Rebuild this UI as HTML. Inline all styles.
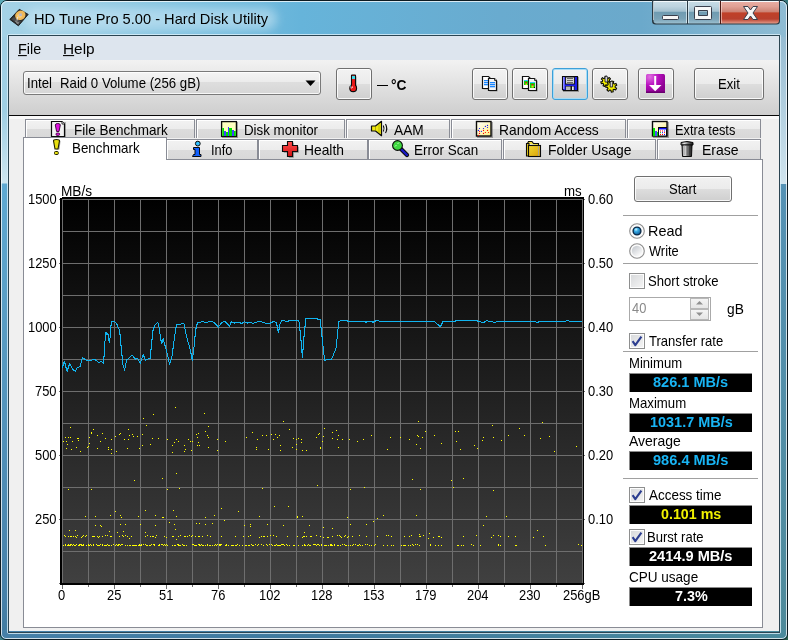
<!DOCTYPE html>
<html><head><meta charset="utf-8"><style>
html,body{margin:0;padding:0;width:788px;height:640px;overflow:hidden;background:linear-gradient(135deg,#5aaab8 0%,#3a7a80 50%,#2a5a4a 100%);}
body{position:relative;font-family:"Liberation Sans", sans-serif;}
.t{position:absolute;white-space:pre;font-family:"Liberation Sans", sans-serif;}
</style></head><body>
<div style="position:absolute;left:0;top:0;width:786px;height:638px;border:1px solid #0d1b22;border-radius:7px 7px 6px 6px;overflow:hidden;">
<div style="position:absolute;left:0;top:0;right:0;bottom:0;background:linear-gradient(to bottom,#a2d1e6 0px,#9fcfe4 110px,#cde6f0 182px,#5ea9d2 183px,#5a9fc6 300px,#4680a8 600px,#3f7a9e 640px);"></div>
<div style="position:absolute;left:0;top:0;right:0;height:36px;background:linear-gradient(to right,#a4d2e6 0px,#9fd0e6 60px,#7cc0e0 200px,#66b4da 300px,#69abcf 500px,#6ba9cb 640px,#90bcd3 788px);"></div>
<div style="position:absolute;left:24px;top:7px;width:252px;height:22px;border-radius:11px;background:rgba(205,232,244,0.55);filter:blur(5px);"></div>
<div style="position:absolute;right:0;top:36px;width:9px;height:147px;background:linear-gradient(to bottom,#96bcd2,#d0e4ee);"></div>
<div style="position:absolute;right:0;top:183px;width:9px;height:457px;background:linear-gradient(to bottom,#5592b5,#4e8a9a);"></div>
<div style="position:absolute;left:0;bottom:0;right:0;height:9px;background:linear-gradient(to right,#4680a8,#3f7a9e 40%,#4a8a9c);"></div>
<div style="position:absolute;left:0;top:0;width:784px;height:636px;border:1px solid rgba(255,255,255,0.75);border-radius:6px 6px 5px 5px;"></div>
</div>
<div style="position:absolute;left:7px;top:34px;width:774px;height:600px;border:1px solid rgba(220,240,250,0.8);box-sizing:border-box;border-radius:2px;"></div>
<div style="position:absolute;left:8px;top:35px;width:772px;height:598px;border:1px solid #2b4552;box-sizing:border-box;"></div>
<div style="position:absolute;left:9px;top:36px;width:770px;height:595px;background:#f0f0f0;"></div>
<svg style="position:absolute;left:6px;top:5px" width="26" height="24" viewBox="0 0 26 24">
<polygon points="13.3,4.3 22.2,9.4 12.4,20.8 3.8,14.4" fill="#2e2e2e" stroke="#151515" stroke-width="0.9" stroke-linejoin="round"/>
<polygon points="5.5,14.3 12.4,19.3 15,16.5 8,12" fill="#4a4a4a"/>
<ellipse cx="14.3" cy="10.3" rx="5.3" ry="4.6" fill="#f0b858" transform="rotate(-25 14.3 10.3)"/>
<ellipse cx="13.5" cy="11" rx="2.5" ry="2" fill="#f8d898" opacity="0.6"/>
<rect x="13.2" y="8.4" width="2.6" height="2.6" fill="#b8b8c8"/>
<path d="M11.5,12 L11,15.5" stroke="#e8e8e8" stroke-width="0.9"/>
<path d="M9,16 L13,18 M10,17.5 L12.5,19" stroke="#a0a0a0" stroke-width="0.8"/>
</svg>
<div class="t" style="left:33.83px;top:11.73px;font-size:14.5px;line-height:14.5px;color:#000;font-weight:400;transform:scale(1.0088,1.07);transform-origin:0 12.274px">HD Tune Pro 5.00 - Hard Disk Utility</div>
<svg style="position:absolute;left:651px;top:0" width="130" height="26" viewBox="0 0 130 26">
<defs>
<linearGradient id="cg" x1="0" y1="0" x2="0" y2="1">
<stop offset="0" stop-color="#c9dde7"/><stop offset="0.25" stop-color="#bcd3df"/><stop offset="0.46" stop-color="#a3c0cf"/>
<stop offset="0.49" stop-color="#6f9bb1"/><stop offset="0.8" stop-color="#7aa3b7"/><stop offset="1" stop-color="#9cc0d0"/></linearGradient>
<linearGradient id="rgc" x1="0" y1="0" x2="0" y2="1">
<stop offset="0" stop-color="#eab0a6"/><stop offset="0.25" stop-color="#e0a094"/><stop offset="0.48" stop-color="#cc8274"/>
<stop offset="0.53" stop-color="#c04028"/><stop offset="0.8" stop-color="#b8402e"/><stop offset="1" stop-color="#e49a88"/></linearGradient>
</defs>
<path d="M1,0 H129 V21 Q129,24.5 125.5,24.5 H4.5 Q1,24.5 1,21 Z" fill="#2a3a44"/>
<path d="M2.5,1 H36 V23.5 H5.5 Q2.5,23.5 2.5,20.5 Z" fill="url(#cg)"/>
<path d="M37,1 H69 V23.5 H37 Z" fill="url(#cg)"/>
<path d="M70,1 H128 V20.5 Q128,23.5 125,23.5 H70 Z" fill="url(#rgc)"/>
<path d="M2.5,1.5 H127.5" stroke="#f4fafd" stroke-width="1"/>
<path d="M2.5,2 V20" stroke="rgba(255,255,255,0.55)" stroke-width="1"/>
<path d="M35.5,2 V23 M37.5,2 V23" stroke="rgba(230,242,248,0.7)" stroke-width="1"/>
<path d="M68.5,2 V23 M70.5,2 V23" stroke="rgba(250,220,215,0.6)" stroke-width="1"/>
<path d="M36.5,1 V24" stroke="#2a3a44" stroke-width="1"/>
<path d="M69.5,1 V24" stroke="#4a1a14" stroke-width="1"/>
<rect x="11.5" y="15.5" width="16" height="4" rx="1" fill="#f6f6f6" stroke="#3a3f4c" stroke-width="1"/>
<path fill-rule="evenodd" d="M43.5,7.5 Q43.5,6.5 44.5,6.5 H59.5 Q60.5,6.5 60.5,7.5 V18.5 Q60.5,19.5 59.5,19.5 H44.5 Q43.5,19.5 43.5,18.5 Z M47.5,10.5 V15.5 H56.5 V10.5 Z" fill="#f8f8f8" stroke="#3a3f4c" stroke-width="1"/>
<path d="M92.5,6.5 H97 L99.5,10 L102,6.5 H106.5 L102,13 L106.5,19.5 H102 L99.5,16 L97,19.5 H92.5 L97,13 Z" fill="#f6f6f6" stroke="#3a3f4c" stroke-width="1" stroke-linejoin="round"/>
</svg>
<div style="position:absolute;left:9px;top:36px;width:770px;height:24px;background:#dde5ee;"></div>
<div class="t" style="left:17.60px;top:41.73px;font-size:14.5px;line-height:14.5px;color:#000;font-weight:400;transform:scale(0.9940,1.07);transform-origin:0 12.274px"><u style="text-underline-offset:1px;text-decoration-thickness:1px">F</u>ile</div>
<div class="t" style="left:62.67px;top:41.73px;font-size:14.5px;line-height:14.5px;color:#000;font-weight:400;transform:scale(1.0591,1.07);transform-origin:0 12.274px"><u style="text-underline-offset:1px;text-decoration-thickness:1px">H</u>elp</div>
<div style="position:absolute;left:9px;top:60px;width:770px;height:55px;background:linear-gradient(to bottom,#f2f2f2,#cecece);"></div>
<div style="position:absolute;left:9px;top:115px;width:770px;height:1px;background:#080808;"></div>
<div style="position:absolute;left:9px;top:116px;width:770px;height:3px;background:#fafafa;"></div>
<div style="position:absolute;left:9px;top:119px;width:770px;height:512px;background:#f0f0f0;"></div>
<div style="position:absolute;left:23px;top:71px;width:298px;height:24px;border:1px solid #7a7a7a;border-radius:3px;box-sizing:border-box;background:linear-gradient(to bottom,#f4f4f4 0%,#ececec 44%,#dedede 46%,#d6d6d6 100%);box-shadow:inset 0 0 0 1px rgba(255,255,255,0.8);"></div>
<div class="t" style="left:26.61px;top:75.73px;font-size:14.5px;line-height:14.5px;color:#000;font-weight:400;transform:scale(0.9087,1.0);transform-origin:0 12.274px">Intel</div>
<div class="t" style="left:59.84px;top:75.73px;font-size:14.5px;line-height:14.5px;color:#000;font-weight:400;transform:scale(0.9117,1.0);transform-origin:0 12.274px">Raid 0 Volume (256 gB)</div>
<svg style="position:absolute;left:305px;top:80px" width="11" height="7"><polygon points="0.5,0.5 10.5,0.5 5.5,6" fill="#000"/></svg>
<div style="position:absolute;left:336px;top:68px;width:36px;height:32px;border:1px solid #707070;border-radius:3px;box-sizing:border-box;background:linear-gradient(to bottom,#f2f2f2 0%,#ebebeb 50%,#dddddd 51%,#cfcfcf 100%);box-shadow:inset 0 0 0 1px rgba(255,255,255,0.85);"></div>
<svg style="position:absolute;left:340px;top:70px" width="24" height="26" viewBox="0 0 24 26">
<path d="M12.5,6.5 H16.5 V21 H12.5 Z" fill="rgba(0,0,0,0.3)"/>
<path d="M11.5,5.5 Q11.5,5 12,5 H15 Q15.5,5 15.5,5.5 V16 H11.5 Z" fill="#e81818" stroke="#0a0a0a" stroke-width="1.1"/>
<rect x="12" y="6" width="3" height="3" fill="#40d8e8"/>
<circle cx="13.2" cy="18.2" r="3.4" fill="#e81818" stroke="#0a0a0a" stroke-width="1.1"/>
<rect x="12" y="14" width="3" height="3" fill="#e81818"/>
<path d="M11.3,18.5 Q11.8,17 13,16.8" stroke="#fff" stroke-width="0.9" fill="none"/>
<rect x="10" y="15" width="1" height="3" fill="#40d8e8" opacity="0.6"/>
</svg>
<div style="position:absolute;left:377px;top:85px;width:11px;height:1px;background:#000;"></div>
<div class="t" style="left:391.05px;top:77.73px;font-size:14.5px;line-height:14.5px;color:#000;font-weight:700;transform:scale(0.9500,1.0);transform-origin:0 12.274px">°C</div>
<div style="position:absolute;left:472px;top:68px;width:36px;height:32px;border:1px solid #707070;border-radius:3px;box-sizing:border-box;background:linear-gradient(to bottom,#f2f2f2 0%,#ebebeb 50%,#dddddd 51%,#cfcfcf 100%);box-shadow:inset 0 0 0 1px rgba(255,255,255,0.85);"></div>
<div style="position:absolute;left:512px;top:68px;width:36px;height:32px;border:1px solid #707070;border-radius:3px;box-sizing:border-box;background:linear-gradient(to bottom,#f2f2f2 0%,#ebebeb 50%,#dddddd 51%,#cfcfcf 100%);box-shadow:inset 0 0 0 1px rgba(255,255,255,0.85);"></div>
<div style="position:absolute;left:552px;top:68px;width:36px;height:32px;border:1px solid #3c9fd8;border-radius:3px;box-sizing:border-box;background:linear-gradient(to bottom,#f2f2f2 0%,#ebebeb 50%,#dddddd 51%,#cfcfcf 100%);box-shadow:inset 0 0 0 1px #a6dcf6;"></div>
<div style="position:absolute;left:592px;top:68px;width:36px;height:32px;border:1px solid #707070;border-radius:3px;box-sizing:border-box;background:linear-gradient(to bottom,#f2f2f2 0%,#ebebeb 50%,#dddddd 51%,#cfcfcf 100%);box-shadow:inset 0 0 0 1px rgba(255,255,255,0.85);"></div>
<div style="position:absolute;left:638px;top:68px;width:36px;height:32px;border:1px solid #707070;border-radius:3px;box-sizing:border-box;background:linear-gradient(to bottom,#f2f2f2 0%,#ebebeb 50%,#dddddd 51%,#cfcfcf 100%);box-shadow:inset 0 0 0 1px rgba(255,255,255,0.85);"></div>
<div style="position:absolute;left:694px;top:68px;width:70px;height:32px;border:1px solid #707070;border-radius:3px;box-sizing:border-box;background:linear-gradient(to bottom,#f2f2f2 0%,#ebebeb 50%,#dddddd 51%,#cfcfcf 100%);box-shadow:inset 0 0 0 1px rgba(255,255,255,0.85);"></div>
<div class="t" style="left:717.55px;top:76.73px;font-size:14.5px;line-height:14.5px;color:#000;font-weight:400;transform:scale(0.9027,1.0);transform-origin:0 12.274px">Exit</div>
<svg style="position:absolute;left:476px;top:70px" width="28" height="26" viewBox="0 0 28 26">
<path d="M7.5,7.5 H13.5 L15.5,9.5 V19.5 H7.5 Z" fill="rgba(0,0,0,0.25)"/>
<path d="M6.5,6.5 H12.5 L14.5,8.5 V18.5 H6.5 Z" fill="#fff" stroke="#111" stroke-width="1.2"/>
<path d="M13.5,9.5 H19.5 L21.5,11.5 V21.5 H13.5 Z" fill="rgba(0,0,0,0.3)"/>
<path d="M12.5,8.5 H18.5 L20.5,10.5 V20.5 H12.5 Z" fill="#f4f4f4" stroke="#111" stroke-width="1.2"/>
<path d="M18.5,8.5 V10.5 H20.5" fill="#fff" stroke="#111" stroke-width="0.8"/>
<g fill="#1a86ff"><rect x="8" y="10" width="4" height="1.3"/><rect x="8" y="12" width="4" height="1.3"/><rect x="8" y="14" width="4" height="1.3"/>
<rect x="14" y="12" width="5" height="1.3"/><rect x="14" y="14" width="5" height="1.3"/><rect x="14" y="16" width="5" height="1.3"/></g>
</svg>
<svg style="position:absolute;left:516px;top:70px" width="28" height="26" viewBox="0 0 28 26">
<path d="M7.5,7.5 H13.5 L15.5,9.5 V19.5 H7.5 Z" fill="rgba(0,0,0,0.25)"/>
<path d="M6.5,6.5 H12.5 L14.5,8.5 V18.5 H6.5 Z" fill="#fff" stroke="#111" stroke-width="1.2"/>
<path d="M13.5,9.5 H19.5 L21.5,11.5 V21.5 H13.5 Z" fill="rgba(0,0,0,0.3)"/>
<path d="M12.5,8.5 H18.5 L20.5,10.5 V20.5 H12.5 Z" fill="#f4f4f4" stroke="#111" stroke-width="1.2"/>
<path d="M18.5,8.5 V10.5 H20.5" fill="#fff" stroke="#111" stroke-width="0.8"/>
<rect x="8" y="10" width="4" height="1" fill="#30c8ff"/><rect x="8" y="11" width="4" height="4" fill="#10d010"/><rect x="9.5" y="12" width="1.5" height="1.5" fill="#e81010"/><rect x="9.5" y="13.5" width="1.5" height="1.5" fill="#e8e010"/>
<rect x="14" y="12" width="5" height="1" fill="#30c8ff"/><rect x="14" y="13" width="5" height="5" fill="#10d010"/><rect x="15.5" y="14" width="2" height="1.5" fill="#e81010"/><rect x="15.5" y="15.5" width="2" height="2" fill="#e8e010"/><rect x="18" y="17" width="1" height="1" fill="#000"/>
</svg>
<svg style="position:absolute;left:556px;top:70px" width="28" height="26" viewBox="0 0 28 26">
<rect x="7" y="7" width="16" height="15" fill="rgba(0,0,0,0.3)"/>
<path d="M6.5,6.5 H21.5 V20.5 H7.5 L6.5,19.5 Z" fill="#1e1ef0" stroke="#0a0a0a" stroke-width="1.1"/>
<rect x="7" y="7" width="1.5" height="12" fill="#8a8aff"/>
<rect x="9.5" y="7" width="9" height="7" fill="#d6d6d6" stroke="#111" stroke-width="0.9"/>
<g stroke="#6a6a6a" stroke-width="1"><line x1="11" y1="8.5" x2="17" y2="8.5"/><line x1="11" y1="10.5" x2="17" y2="10.5"/><line x1="11" y1="12.5" x2="17" y2="12.5"/></g>
<rect x="9.5" y="16" width="9" height="4.5" fill="#111"/>
<rect x="10" y="16.5" width="4.5" height="3.5" fill="#b8b8b8"/><rect x="16" y="16.5" width="1.8" height="3.5" fill="#e8e8e8"/>
</svg>
<svg style="position:absolute;left:596px;top:70px" width="28" height="26" viewBox="0 0 28 26">
<g stroke="#0a0a0a" stroke-width="1.1" fill="#f4f000" stroke-linejoin="round">
<path d="M15.20,11.60 L14.83,13.43 L13.21,13.13 L12.43,14.15 L13.16,15.63 L11.50,16.48 L10.73,15.03 L9.44,15.06 L8.74,16.55 L7.05,15.78 L7.70,14.27 L6.87,13.28 L5.27,13.66 L4.81,11.86 L6.40,11.43 L6.66,10.16 L5.36,9.15 L6.49,7.67 L7.81,8.64 L8.96,8.05 L8.94,6.41 L10.81,6.36 L10.87,8.01 L12.05,8.54 L13.32,7.50 L14.52,8.93 L13.27,10.00 L13.59,11.25 Z"/>
<path d="M20.62,18.26 L19.65,20.02 L18.10,19.21 L16.97,20.03 L17.24,21.75 L15.26,22.10 L14.93,20.38 L13.58,20.00 L12.40,21.29 L10.90,19.96 L12.03,18.63 L11.49,17.34 L9.75,17.22 L9.85,15.22 L11.60,15.27 L12.27,14.05 L11.28,12.61 L12.90,11.44 L13.95,12.84 L15.33,12.60 L15.83,10.93 L17.76,11.47 L17.32,13.16 L18.37,14.09 L19.99,13.44 L20.77,15.29 L19.17,16.00 L19.10,17.39 Z"/>
</g>
<path d="M9,12 V7.5 L10.3,5.8 L11.6,7.5 V12 Z" fill="#d0d0d8" stroke="#222" stroke-width="0.9"/>
<path d="M14.2,17 V12.5 L15.4,11 L16.6,12.5 V17 Z" fill="#d0d0d8" stroke="#222" stroke-width="0.9"/>
</svg>
<svg style="position:absolute;left:642px;top:70px" width="28" height="26" viewBox="0 0 28 26">
<defs><radialGradient id="pg" cx="0.2" cy="0.15" r="0.9"><stop offset="0" stop-color="#e070e0"/><stop offset="0.5" stop-color="#b810c0"/><stop offset="1" stop-color="#8a008e"/></radialGradient></defs>
<rect x="4" y="4" width="19" height="19" rx="1.5" fill="url(#pg)"/>
<rect x="4" y="21.5" width="19" height="1.5" fill="#6a0070"/>
<rect x="12.2" y="6" width="2" height="10" fill="#fff"/>
<path d="M7,15 H19.5 L13.2,21.2 Z" fill="#fff"/>
</svg>
<div style="position:absolute;left:25px;top:119px;width:170px;height:19px;border:1px solid #898c95;border-bottom:none;box-sizing:border-box;background:linear-gradient(to bottom,#f2f2f2 0%,#ececec 50%,#dcdcdc 51%,#d8d8d8 100%);box-shadow:inset 1px 1px 0 #fff;"></div>
<div style="position:absolute;left:196px;top:119px;width:149px;height:19px;border:1px solid #898c95;border-bottom:none;box-sizing:border-box;background:linear-gradient(to bottom,#f2f2f2 0%,#ececec 50%,#dcdcdc 51%,#d8d8d8 100%);box-shadow:inset 1px 1px 0 #fff;"></div>
<div style="position:absolute;left:346px;top:119px;width:104px;height:19px;border:1px solid #898c95;border-bottom:none;box-sizing:border-box;background:linear-gradient(to bottom,#f2f2f2 0%,#ececec 50%,#dcdcdc 51%,#d8d8d8 100%);box-shadow:inset 1px 1px 0 #fff;"></div>
<div style="position:absolute;left:451px;top:119px;width:175px;height:19px;border:1px solid #898c95;border-bottom:none;box-sizing:border-box;background:linear-gradient(to bottom,#f2f2f2 0%,#ececec 50%,#dcdcdc 51%,#d8d8d8 100%);box-shadow:inset 1px 1px 0 #fff;"></div>
<div style="position:absolute;left:627px;top:119px;width:134px;height:19px;border:1px solid #898c95;border-bottom:none;box-sizing:border-box;background:linear-gradient(to bottom,#f2f2f2 0%,#ececec 50%,#dcdcdc 51%,#d8d8d8 100%);box-shadow:inset 1px 1px 0 #fff;"></div>
<div style="position:absolute;left:166px;top:139px;width:92px;height:21px;border:1px solid #898c95;border-bottom:none;box-sizing:border-box;background:linear-gradient(to bottom,#f2f2f2 0%,#ececec 50%,#dcdcdc 51%,#d8d8d8 100%);box-shadow:inset 1px 1px 0 #fff;"></div>
<div style="position:absolute;left:258px;top:139px;width:110px;height:21px;border:1px solid #898c95;border-bottom:none;box-sizing:border-box;background:linear-gradient(to bottom,#f2f2f2 0%,#ececec 50%,#dcdcdc 51%,#d8d8d8 100%);box-shadow:inset 1px 1px 0 #fff;"></div>
<div style="position:absolute;left:368px;top:139px;width:134px;height:21px;border:1px solid #898c95;border-bottom:none;box-sizing:border-box;background:linear-gradient(to bottom,#f2f2f2 0%,#ececec 50%,#dcdcdc 51%,#d8d8d8 100%);box-shadow:inset 1px 1px 0 #fff;"></div>
<div style="position:absolute;left:503px;top:139px;width:153px;height:21px;border:1px solid #898c95;border-bottom:none;box-sizing:border-box;background:linear-gradient(to bottom,#f2f2f2 0%,#ececec 50%,#dcdcdc 51%,#d8d8d8 100%);box-shadow:inset 1px 1px 0 #fff;"></div>
<div style="position:absolute;left:657px;top:139px;width:104px;height:21px;border:1px solid #898c95;border-bottom:none;box-sizing:border-box;background:linear-gradient(to bottom,#f2f2f2 0%,#ececec 50%,#dcdcdc 51%,#d8d8d8 100%);box-shadow:inset 1px 1px 0 #fff;"></div>
<div style="position:absolute;left:23px;top:159px;width:740px;height:469px;border:1px solid #898c95;box-sizing:border-box;background:#fff;"></div>
<div style="position:absolute;left:23px;top:137px;width:144px;height:23px;border:1px solid #898c95;border-bottom:none;box-sizing:border-box;background:#fff;"></div>
<div class="t" style="left:73.62px;top:122.73px;font-size:14.5px;line-height:14.5px;color:#000;font-weight:400;transform:scale(0.9307,1.0);transform-origin:0 12.274px">File Benchmark</div>
<div class="t" style="left:243.73px;top:122.73px;font-size:14.5px;line-height:14.5px;color:#000;font-weight:400;transform:scale(0.9189,1.0);transform-origin:0 12.274px">Disk monitor</div>
<div class="t" style="left:394.20px;top:122.73px;font-size:14.5px;line-height:14.5px;color:#000;font-weight:400;transform:scale(0.9452,1.0);transform-origin:0 12.274px">AAM</div>
<div class="t" style="left:498.50px;top:122.73px;font-size:14.5px;line-height:14.5px;color:#000;font-weight:400;transform:scale(0.9521,1.0);transform-origin:0 12.274px">Random Access</div>
<div class="t" style="left:674.88px;top:122.73px;font-size:14.5px;line-height:14.5px;color:#000;font-weight:400;transform:scale(0.8804,1.0);transform-origin:0 12.274px">Extra tests</div>
<div class="t" style="left:71.83px;top:140.73px;font-size:14.5px;line-height:14.5px;color:#000;font-weight:400;transform:scale(0.9223,1.0);transform-origin:0 12.274px">Benchmark</div>
<div class="t" style="left:211.44px;top:142.73px;font-size:14.5px;line-height:14.5px;color:#000;font-weight:400;transform:scale(0.8857,1.0);transform-origin:0 12.274px">Info</div>
<div class="t" style="left:304.29px;top:142.73px;font-size:14.5px;line-height:14.5px;color:#000;font-weight:400;transform:scale(0.9539,1.0);transform-origin:0 12.274px">Health</div>
<div class="t" style="left:413.92px;top:142.73px;font-size:14.5px;line-height:14.5px;color:#000;font-weight:400;transform:scale(0.9283,1.0);transform-origin:0 12.274px">Error Scan</div>
<div class="t" style="left:547.89px;top:142.73px;font-size:14.5px;line-height:14.5px;color:#000;font-weight:400;transform:scale(0.9595,1.0);transform-origin:0 12.274px">Folder Usage</div>
<div class="t" style="left:701.88px;top:142.73px;font-size:14.5px;line-height:14.5px;color:#000;font-weight:400;transform:scale(0.9670,1.0);transform-origin:0 12.274px">Erase</div>
<svg style="position:absolute;left:0;top:0" width="788" height="170" viewBox="0 0 788 170">
<defs>
<linearGradient id="ly" x1="0" y1="0" x2="1" y2="1"><stop offset="0" stop-color="#ffffff"/><stop offset="1" stop-color="#fff080"/></linearGradient>
<linearGradient id="fold" x1="0" y1="0" x2="1" y2="1"><stop offset="0" stop-color="#f0d830"/><stop offset="1" stop-color="#d8a008"/></linearGradient>
<linearGradient id="trash" x1="0" y1="0" x2="1" y2="0"><stop offset="0" stop-color="#606060"/><stop offset="0.25" stop-color="#f0f0f0"/><stop offset="0.55" stop-color="#808080"/><stop offset="1" stop-color="#101010"/></linearGradient>
<linearGradient id="redc" x1="0" y1="0" x2="0" y2="1"><stop offset="0" stop-color="#ff5050"/><stop offset="1" stop-color="#d01010"/></linearGradient>
</defs>
<!-- File Benchmark: doc with magenta ! -->
<path d="M52.5,122.5 H52.5" />
<rect x="52" y="122" width="14" height="15" fill="rgba(0,0,0,0.25)"/>
<path d="M51.5,121.5 H62 L64.5,124 V136.5 H51.5 Z" fill="#f2f2f2" stroke="#0a0a0a" stroke-width="1.2"/>
<path d="M62,121.5 V124 H64.5" fill="#fff" stroke="#0a0a0a" stroke-width="0.8"/>
<path d="M55.3,125 Q55.3,123.5 57.8,123.5 Q60.3,123.5 60.3,125 L59,131.5 H56.6 Z" fill="#e010e0" stroke="#300030" stroke-width="0.9"/>
<rect x="56" y="133" width="3.6" height="2.4" rx="1" fill="#e010e0" stroke="#300030" stroke-width="0.8"/>
<!-- Benchmark: yellow ! -->
<path d="M54,141 Q54,139.5 56.5,139.5 Q59.5,139.5 59.5,141 L58.5,149 H55 Z" fill="rgba(0,0,0,0.35)" transform="translate(1,0.6)"/>
<path d="M53.5,140.8 Q53.5,139.5 56.5,139.5 Q59.5,139.5 59.5,140.8 L58,149 H55 Z" fill="#e8e010" stroke="#202000" stroke-width="1.1"/>
<rect x="54.5" y="151.5" width="3.8" height="3" rx="1" fill="#e8e010" stroke="#202000" stroke-width="1"/>
<!-- Disk monitor -->
<rect x="222" y="122" width="16" height="16" fill="rgba(0,0,0,0.3)"/>
<rect x="221.6" y="121.6" width="14.8" height="14.8" fill="#ffffc0" stroke="#0a0a0a" stroke-width="1.3"/>
<path d="M222.3,136 V128 H224 V136 Z M226,136 V132 H228 V136 Z M229,136 V128 H232 V136 Z M234,136 V131 H235.8 V136 Z" fill="#00e000"/>
<path d="M224,136 V131 H226 V136 Z M228,136 V127 H229 V136 Z M232,136 V130 H234 V136 Z" fill="#4040ff"/>
<!-- AAM speaker -->
<path d="M371.5,126 H375.5 L381.5,121.3 V135.7 L375.5,131 H371.5 Z" fill="#f0e810" stroke="#0a0a0a" stroke-width="1.2" stroke-linejoin="round"/>
<path d="M375.5,126.5 V130.5" stroke="#505000" stroke-width="0.8" stroke-dasharray="1,1"/>
<path d="M379,124 V133" stroke="#a0a000" stroke-width="0.7"/>
<path d="M383.3,125.5 Q384.8,128.5 383.3,131.5 M385.5,124 Q388,128.5 385.5,133" stroke="#0a0a0a" stroke-width="1.1" fill="none"/>
<!-- Random access -->
<rect x="477" y="122" width="16" height="16" fill="rgba(0,0,0,0.3)"/>
<rect x="476.5" y="121.5" width="14.5" height="14.5" fill="url(#ly)" stroke="#0a0a0a" stroke-width="1.4"/>
<g fill="#1010ff"><circle cx="479.5" cy="128.5" r="0.62"/><circle cx="478.4" cy="130.4" r="0.62"/><circle cx="481.4" cy="131.3" r="0.62"/><circle cx="483.5" cy="128.5" r="0.62"/><circle cx="485.4" cy="126.4" r="0.62"/><circle cx="487.5" cy="125.4" r="0.62"/><circle cx="487.5" cy="127.5" r="0.62"/></g>
<g fill="#ff0000"><circle cx="479.5" cy="131.3" r="0.62"/><circle cx="479.5" cy="133.4" r="0.62"/><circle cx="483.5" cy="130.4" r="0.62"/><circle cx="483.5" cy="133.4" r="0.62"/><circle cx="485.4" cy="132.5" r="0.62"/><circle cx="487.5" cy="130.4" r="0.62"/><circle cx="488.5" cy="132.5" r="0.62"/><circle cx="478.4" cy="135.3" r="0.62"/></g>
<!-- Extra tests -->
<rect x="653" y="122" width="16" height="16" fill="rgba(0,0,0,0.3)"/>
<rect x="652.5" y="121.5" width="14.5" height="14.5" fill="url(#ly)" stroke="#0a0a0a" stroke-width="1.4"/>
<path d="M653,136 V128 H655 V136 Z M657,136 V132 H658 V136 Z" fill="#00e000"/>
<path d="M655,136 V131 H657 V136 Z" fill="#4848ff"/>
<rect x="658.5" y="127.5" width="8" height="8.5" fill="#fff" stroke="#0a0a0a" stroke-width="1"/>
<rect x="659" y="128" width="7.5" height="1.5" fill="#1010ff"/>
<g fill="#ff0000"><rect x="660" y="130.5" width="1" height="1"/><rect x="662" y="130.5" width="1" height="1"/><rect x="660" y="134" width="1" height="1"/><rect x="662" y="134" width="1" height="1"/><rect x="664" y="132.2" width="1" height="1"/></g>
<g fill="#00c000"><rect x="660" y="132.2" width="1" height="1"/></g>
<g fill="#1010ff"><rect x="664" y="130.5" width="1" height="1"/><rect x="664" y="134" width="1" height="1"/><rect x="662" y="132.2" width="1" height="1"/></g>
<!-- Info -->
<circle cx="197.8" cy="143.6" r="2.4" fill="#30c0ff" stroke="#0a0a0a" stroke-width="1"/>
<path d="M193.5,147.5 H199.5 V154.5 H201 V156.5 H192.5 L193.5,154.5 H195 V149.5 H193.5 Z" fill="#1060ff" stroke="#0a0a0a" stroke-width="1" stroke-linejoin="round"/>
<!-- Health -->
<path d="M288,142 H293 V146 H298 V152 H293 V157 H288 V152 H283 V146 H288 Z" fill="rgba(0,0,0,0.35)" transform="translate(0.8,0.8)"/>
<path d="M287.5,141.5 H292.5 V145.5 H297.5 V151.5 H292.5 V156.5 H287.5 V151.5 H282.5 V145.5 H287.5 Z" fill="url(#redc)" stroke="#0a0a0a" stroke-width="1.1"/>
<!-- Error scan -->
<line x1="401" y1="149" x2="407" y2="155" stroke="#0a0a0a" stroke-width="4.2" stroke-linecap="round"/>
<line x1="401" y1="149" x2="407" y2="155" stroke="#1818c8" stroke-width="2.2" stroke-linecap="round"/>
<circle cx="397.5" cy="145.5" r="4.9" fill="#40d840" stroke="#0a0a0a" stroke-width="1.1"/>
<path d="M395,146.5 L396.5,145 M397.5,144 L399,142.5" stroke="#d0ffd0" stroke-width="0.9"/>
<!-- Folder -->
<path d="M527.5,143.5 L528.5,141.5 H532 L533.5,143.5 H538.5 V145.5" fill="#f0e040" stroke="#0a0a0a" stroke-width="1.1"/>
<path d="M526.5,143.5 H529 V156 H526.5 Z" fill="#e8d020" stroke="#0a0a0a" stroke-width="1.1"/>
<rect x="528.5" y="145.5" width="12" height="11" fill="url(#fold)" stroke="#0a0a0a" stroke-width="1.1"/>
<line x1="538.5" y1="146" x2="538.5" y2="156" stroke="#a0a0a0" stroke-width="0.8"/>
<!-- Trash -->
<path d="M681,142.5 Q687,140.5 693,142.5 V145 H681 Z" fill="url(#trash)" stroke="#0a0a0a" stroke-width="1"/>
<path d="M682,145 H692 L691.5,156.5 H682.5 Z" fill="url(#trash)" stroke="#0a0a0a" stroke-width="1"/>
<path d="M684.5,146 V155.5 M687,146 V155.5 M689.5,146 V155.5" stroke="rgba(0,0,0,0.35)" stroke-width="0.7"/>
</svg>
<div style="position:absolute;left:60px;top:197px;width:524px;height:388px;background:#000;"></div>
<div style="position:absolute;left:62px;top:199px;width:521px;height:384px;background:linear-gradient(to bottom,#000000 0%,#404040 100%);"></div>
<svg style="position:absolute;left:0;top:0" width="788" height="640" viewBox="0 0 788 640">
<path d="M62.5,199 V583 M88.5,199 V583 M114.5,199 V583 M140.5,199 V583 M166.5,199 V583 M192.5,199 V583 M218.5,199 V583 M244.5,199 V583 M270.5,199 V583 M296.5,199 V583 M322.5,199 V583 M348.5,199 V583 M374.5,199 V583 M400.5,199 V583 M426.5,199 V583 M452.5,199 V583 M478.5,199 V583 M504.5,199 V583 M530.5,199 V583 M556.5,199 V583 M582.5,199 V583 M62,199.5 H583 M62,231.5 H583 M62,263.5 H583 M62,295.5 H583 M62,327.5 H583 M62,359.5 H583 M62,391.5 H583 M62,423.5 H583 M62,455.5 H583 M62,487.5 H583 M62,519.5 H583 M62,551.5 H583 M62,583.5 H583" stroke="#6e6e6e" stroke-width="1" fill="none"/>
<rect x="60" y="583" width="524" height="2" fill="#000"/>
<rect x="583" y="197" width="1" height="388" fill="#000"/>
<rect x="60" y="197" width="2" height="388" fill="#000"/>
<rect x="62" y="197" width="521" height="2" fill="#000"/>
<rect x="60" y="197" width="2" height="1" fill="#fff"/>
<path d="M62.5,585 V589 M88.5,585 V587 M114.5,585 V589 M140.5,585 V587 M166.5,585 V589 M192.5,585 V587 M218.5,585 V589 M244.5,585 V587 M270.5,585 V589 M296.5,585 V587 M322.5,585 V589 M348.5,585 V587 M374.5,585 V589 M400.5,585 V587 M426.5,585 V589 M452.5,585 V587 M478.5,585 V589 M504.5,585 V587 M530.5,585 V589 M556.5,585 V587 M582.5,585 V589 M59,199.5 H60 M584,199.5 H585 M59,263.5 H60 M584,263.5 H585 M59,327.5 H60 M584,327.5 H585 M59,391.5 H60 M584,391.5 H585 M59,455.5 H60 M584,455.5 H585 M59,519.5 H60 M584,519.5 H585 M59,583.5 H60 M584,583.5 H585" stroke="#707070" stroke-width="1" fill="none"/>
<path d="M70,427h1v1h-1zM65,437h1v1h-1zM68,437h1v1h-1zM70,437h1v1h-1zM77,438h1v1h-1zM78,438h1v1h-1zM78,440h1v1h-1zM63,441h1v1h-1zM66,441h1v1h-1zM72,441h1v1h-1zM67,444h1v1h-1zM66,448h1v1h-1zM71,449h1v1h-1zM76,447h1v1h-1zM80,451h1v1h-1zM91,432h1v1h-1zM91,433h1v1h-1zM93,429h1v1h-1zM89,437h1v1h-1zM97,435h1v1h-1zM102,433h1v1h-1zM105,438h1v1h-1zM100,441h1v1h-1zM89,443h1v1h-1zM88,446h1v1h-1zM87,447h1v1h-1zM97,448h1v1h-1zM111,439h1v1h-1zM108,447h1v1h-1zM108,449h1v1h-1zM111,449h1v1h-1zM111,453h1v1h-1zM116,451h1v1h-1zM115,436h1v1h-1zM119,434h1v1h-1zM120,433h1v1h-1zM128,429h1v1h-1zM129,435h1v1h-1zM132,434h1v1h-1zM133,436h1v1h-1zM124,439h1v1h-1zM128,439h1v1h-1zM137,436h1v1h-1zM127,448h1v1h-1zM139,448h1v1h-1zM142,434h1v1h-1zM143,418h1v1h-1zM146,425h1v1h-1zM153,414h1v1h-1zM152,438h1v1h-1zM158,438h1v1h-1zM142,445h1v1h-1zM150,444h1v1h-1zM175,407h1v1h-1zM204,413h1v1h-1zM208,426h1v1h-1zM205,431h1v1h-1zM198,433h1v1h-1zM196,434h1v1h-1zM207,435h1v1h-1zM197,437h1v1h-1zM208,437h1v1h-1zM167,439h1v1h-1zM176,439h1v1h-1zM188,439h1v1h-1zM178,441h1v1h-1zM190,441h1v1h-1zM192,441h1v1h-1zM174,442h1v1h-1zM198,442h1v1h-1zM172,445h1v1h-1zM184,445h1v1h-1zM197,445h1v1h-1zM199,445h1v1h-1zM208,447h1v1h-1zM185,449h1v1h-1zM184,451h1v1h-1zM191,450h1v1h-1zM172,452h1v1h-1zM217,439h1v1h-1zM217,450h1v1h-1zM225,441h1v1h-1zM246,437h1v1h-1zM252,432h1v1h-1zM257,439h1v1h-1zM256,447h1v1h-1zM256,449h1v1h-1zM283,421h1v1h-1zM289,429h1v1h-1zM262,435h1v1h-1zM266,435h1v1h-1zM271,434h1v1h-1zM275,434h1v1h-1zM279,435h1v1h-1zM277,437h1v1h-1zM273,439h1v1h-1zM280,445h1v1h-1zM268,449h1v1h-1zM280,450h1v1h-1zM293,438h1v1h-1zM296,439h1v1h-1zM298,438h1v1h-1zM301,439h1v1h-1zM301,442h1v1h-1zM296,444h1v1h-1zM292,447h1v1h-1zM296,449h1v1h-1zM302,450h1v1h-1zM306,450h1v1h-1zM316,437h1v1h-1zM318,434h1v1h-1zM319,433h1v1h-1zM324,428h1v1h-1zM323,436h1v1h-1zM322,441h1v1h-1zM320,447h1v1h-1zM320,448h1v1h-1zM332,432h1v1h-1zM336,430h1v1h-1zM338,435h1v1h-1zM332,438h1v1h-1zM337,439h1v1h-1zM342,439h1v1h-1zM349,439h1v1h-1zM338,447h1v1h-1zM357,441h1v1h-1zM418,421h1v1h-1zM363,439h1v1h-1zM371,435h1v1h-1zM390,437h1v1h-1zM400,437h1v1h-1zM409,439h1v1h-1zM417,435h1v1h-1zM418,436h1v1h-1zM422,437h1v1h-1zM425,431h1v1h-1zM416,444h1v1h-1zM420,448h1v1h-1zM387,449h1v1h-1zM434,435h1v1h-1zM441,443h1v1h-1zM455,431h1v1h-1zM458,431h1v1h-1zM456,441h1v1h-1zM460,449h1v1h-1zM474,445h1v1h-1zM477,448h1v1h-1zM482,440h1v1h-1zM483,437h1v1h-1zM492,425h1v1h-1zM493,437h1v1h-1zM501,440h1v1h-1zM508,435h1v1h-1zM519,428h1v1h-1zM524,435h1v1h-1zM540,438h1v1h-1zM542,422h1v1h-1zM549,436h1v1h-1zM554,451h1v1h-1zM576,446h1v1h-1zM134,480h1v1h-1zM68,489h1v1h-1zM91,489h1v1h-1zM85,516h1v1h-1zM95,516h1v1h-1zM110,515h1v1h-1zM115,511h1v1h-1zM120,515h1v1h-1zM121,517h1v1h-1zM138,516h1v1h-1zM145,510h1v1h-1zM155,515h1v1h-1zM95,525h1v1h-1zM100,525h1v1h-1zM101,526h1v1h-1zM120,524h1v1h-1zM125,524h1v1h-1zM140,524h1v1h-1zM155,525h1v1h-1zM69,530h1v1h-1zM75,530h1v1h-1zM109,531h1v1h-1zM123,531h1v1h-1zM162,478h1v1h-1zM176,473h1v1h-1zM167,489h1v1h-1zM179,488h1v1h-1zM173,510h1v1h-1zM176,516h1v1h-1zM162,517h1v1h-1zM163,517h1v1h-1zM169,522h1v1h-1zM174,524h1v1h-1zM175,529h1v1h-1zM196,523h1v1h-1zM199,523h1v1h-1zM205,517h1v1h-1zM205,524h1v1h-1zM212,523h1v1h-1zM214,515h1v1h-1zM221,508h1v1h-1zM224,520h1v1h-1zM238,511h1v1h-1zM244,525h1v1h-1zM250,524h1v1h-1zM250,526h1v1h-1zM259,516h1v1h-1zM262,488h1v1h-1zM317,485h1v1h-1zM350,489h1v1h-1zM274,506h1v1h-1zM288,506h1v1h-1zM297,516h1v1h-1zM297,517h1v1h-1zM302,516h1v1h-1zM347,517h1v1h-1zM267,524h1v1h-1zM283,525h1v1h-1zM309,525h1v1h-1zM323,527h1v1h-1zM332,528h1v1h-1zM350,524h1v1h-1zM364,487h1v1h-1zM412,479h1v1h-1zM420,489h1v1h-1zM451,480h1v1h-1zM453,487h1v1h-1zM383,515h1v1h-1zM377,518h1v1h-1zM373,521h1v1h-1zM366,524h1v1h-1zM416,515h1v1h-1zM463,478h1v1h-1zM493,490h1v1h-1zM486,516h1v1h-1zM506,516h1v1h-1zM483,525h1v1h-1zM537,530h1v1h-1zM63,545h1v1h-1zM64,535h1v1h-1zM65,544h1v1h-1zM65,545h1v1h-1zM65,536h1v1h-1zM67,545h1v1h-1zM68,545h1v1h-1zM68,544h1v1h-1zM68,536h1v1h-1zM69,545h1v1h-1zM70,545h1v1h-1zM70,544h1v1h-1zM70,536h1v1h-1zM71,544h1v1h-1zM71,536h1v1h-1zM72,545h1v1h-1zM73,544h1v1h-1zM73,536h1v1h-1zM74,545h1v1h-1zM75,545h1v1h-1zM75,536h1v1h-1zM75,536h1v1h-1zM76,544h1v1h-1zM76,537h1v1h-1zM77,535h1v1h-1zM78,545h1v1h-1zM79,544h1v1h-1zM79,545h1v1h-1zM80,544h1v1h-1zM81,544h1v1h-1zM81,545h1v1h-1zM81,537h1v1h-1zM82,545h1v1h-1zM82,536h1v1h-1zM83,544h1v1h-1zM83,545h1v1h-1zM83,535h1v1h-1zM85,536h1v1h-1zM86,545h1v1h-1zM86,535h1v1h-1zM88,544h1v1h-1zM88,545h1v1h-1zM89,545h1v1h-1zM90,544h1v1h-1zM91,545h1v1h-1zM92,536h1v1h-1zM93,544h1v1h-1zM93,545h1v1h-1zM93,536h1v1h-1zM94,536h1v1h-1zM96,544h1v1h-1zM97,545h1v1h-1zM97,536h1v1h-1zM98,545h1v1h-1zM98,537h1v1h-1zM99,545h1v1h-1zM99,536h1v1h-1zM100,544h1v1h-1zM102,545h1v1h-1zM102,544h1v1h-1zM102,536h1v1h-1zM104,545h1v1h-1zM105,545h1v1h-1zM105,535h1v1h-1zM106,545h1v1h-1zM107,544h1v1h-1zM107,535h1v1h-1zM108,545h1v1h-1zM109,545h1v1h-1zM110,536h1v1h-1zM111,545h1v1h-1zM111,536h1v1h-1zM113,544h1v1h-1zM115,545h1v1h-1zM116,544h1v1h-1zM117,545h1v1h-1zM117,532h1v1h-1zM118,544h1v1h-1zM118,545h1v1h-1zM119,544h1v1h-1zM119,536h1v1h-1zM120,545h1v1h-1zM121,544h1v1h-1zM122,544h1v1h-1zM122,535h1v1h-1zM123,536h1v1h-1zM125,545h1v1h-1zM125,535h1v1h-1zM127,545h1v1h-1zM127,536h1v1h-1zM129,545h1v1h-1zM129,538h1v1h-1zM130,545h1v1h-1zM131,536h1v1h-1zM132,545h1v1h-1zM133,545h1v1h-1zM134,545h1v1h-1zM135,545h1v1h-1zM136,545h1v1h-1zM138,545h1v1h-1zM139,545h1v1h-1zM139,544h1v1h-1zM140,545h1v1h-1zM141,544h1v1h-1zM141,545h1v1h-1zM143,544h1v1h-1zM145,544h1v1h-1zM145,536h1v1h-1zM145,532h1v1h-1zM146,545h1v1h-1zM147,545h1v1h-1zM147,535h1v1h-1zM149,545h1v1h-1zM150,545h1v1h-1zM150,536h1v1h-1zM151,544h1v1h-1zM152,536h1v1h-1zM153,544h1v1h-1zM153,536h1v1h-1zM154,545h1v1h-1zM154,544h1v1h-1zM155,537h1v1h-1zM156,535h1v1h-1zM158,545h1v1h-1zM159,544h1v1h-1zM159,545h1v1h-1zM161,544h1v1h-1zM162,544h1v1h-1zM163,545h1v1h-1zM164,544h1v1h-1zM164,536h1v1h-1zM165,545h1v1h-1zM166,544h1v1h-1zM166,537h1v1h-1zM167,545h1v1h-1zM172,545h1v1h-1zM172,536h1v1h-1zM173,536h1v1h-1zM174,545h1v1h-1zM175,545h1v1h-1zM176,539h1v1h-1zM177,544h1v1h-1zM178,545h1v1h-1zM178,544h1v1h-1zM178,536h1v1h-1zM179,545h1v1h-1zM180,545h1v1h-1zM180,535h1v1h-1zM182,544h1v1h-1zM183,545h1v1h-1zM184,545h1v1h-1zM184,536h1v1h-1zM185,536h1v1h-1zM186,545h1v1h-1zM187,536h1v1h-1zM189,535h1v1h-1zM191,536h1v1h-1zM192,544h1v1h-1zM192,535h1v1h-1zM193,544h1v1h-1zM194,545h1v1h-1zM195,545h1v1h-1zM195,536h1v1h-1zM196,545h1v1h-1zM198,544h1v1h-1zM198,536h1v1h-1zM199,544h1v1h-1zM199,545h1v1h-1zM199,536h1v1h-1zM200,545h1v1h-1zM201,544h1v1h-1zM202,545h1v1h-1zM202,536h1v1h-1zM203,545h1v1h-1zM205,545h1v1h-1zM207,545h1v1h-1zM207,544h1v1h-1zM207,535h1v1h-1zM209,545h1v1h-1zM210,545h1v1h-1zM210,536h1v1h-1zM212,545h1v1h-1zM214,545h1v1h-1zM215,544h1v1h-1zM216,545h1v1h-1zM217,544h1v1h-1zM219,545h1v1h-1zM219,544h1v1h-1zM220,545h1v1h-1zM220,544h1v1h-1zM221,544h1v1h-1zM221,536h1v1h-1zM225,545h1v1h-1zM226,545h1v1h-1zM226,544h1v1h-1zM228,545h1v1h-1zM231,545h1v1h-1zM232,545h1v1h-1zM233,545h1v1h-1zM235,545h1v1h-1zM235,536h1v1h-1zM236,545h1v1h-1zM237,544h1v1h-1zM239,545h1v1h-1zM242,545h1v1h-1zM243,536h1v1h-1zM245,545h1v1h-1zM246,545h1v1h-1zM248,545h1v1h-1zM248,536h1v1h-1zM249,545h1v1h-1zM250,535h1v1h-1zM251,544h1v1h-1zM252,545h1v1h-1zM253,545h1v1h-1zM255,544h1v1h-1zM257,545h1v1h-1zM258,544h1v1h-1zM259,537h1v1h-1zM261,544h1v1h-1zM261,536h1v1h-1zM263,545h1v1h-1zM263,536h1v1h-1zM264,536h1v1h-1zM266,544h1v1h-1zM267,545h1v1h-1zM267,536h1v1h-1zM269,544h1v1h-1zM270,535h1v1h-1zM271,544h1v1h-1zM272,545h1v1h-1zM273,535h1v1h-1zM274,545h1v1h-1zM275,545h1v1h-1zM276,544h1v1h-1zM276,536h1v1h-1zM277,545h1v1h-1zM278,545h1v1h-1zM279,545h1v1h-1zM280,545h1v1h-1zM281,544h1v1h-1zM282,544h1v1h-1zM283,544h1v1h-1zM284,545h1v1h-1zM286,544h1v1h-1zM287,545h1v1h-1zM287,536h1v1h-1zM289,545h1v1h-1zM293,545h1v1h-1zM294,545h1v1h-1zM297,536h1v1h-1zM298,545h1v1h-1zM302,545h1v1h-1zM302,537h1v1h-1zM303,536h1v1h-1zM304,545h1v1h-1zM304,544h1v1h-1zM304,536h1v1h-1zM304,532h1v1h-1zM305,545h1v1h-1zM306,536h1v1h-1zM307,545h1v1h-1zM308,544h1v1h-1zM309,545h1v1h-1zM310,545h1v1h-1zM310,536h1v1h-1zM311,536h1v1h-1zM313,544h1v1h-1zM314,544h1v1h-1zM315,544h1v1h-1zM316,545h1v1h-1zM316,535h1v1h-1zM317,544h1v1h-1zM318,544h1v1h-1zM319,545h1v1h-1zM320,536h1v1h-1zM321,545h1v1h-1zM321,544h1v1h-1zM323,537h1v1h-1zM324,545h1v1h-1zM325,545h1v1h-1zM326,545h1v1h-1zM327,537h1v1h-1zM328,545h1v1h-1zM328,537h1v1h-1zM330,545h1v1h-1zM330,544h1v1h-1zM331,545h1v1h-1zM331,544h1v1h-1zM332,545h1v1h-1zM332,536h1v1h-1zM334,544h1v1h-1zM334,545h1v1h-1zM337,545h1v1h-1zM337,535h1v1h-1zM338,545h1v1h-1zM339,535h1v1h-1zM340,545h1v1h-1zM340,536h1v1h-1zM341,537h1v1h-1zM342,544h1v1h-1zM344,544h1v1h-1zM344,536h1v1h-1zM345,545h1v1h-1zM345,535h1v1h-1zM346,545h1v1h-1zM347,537h1v1h-1zM348,545h1v1h-1zM348,536h1v1h-1zM350,545h1v1h-1zM352,545h1v1h-1zM352,536h1v1h-1zM353,544h1v1h-1zM355,544h1v1h-1zM357,545h1v1h-1zM358,545h1v1h-1zM359,544h1v1h-1zM359,535h1v1h-1zM360,545h1v1h-1zM362,545h1v1h-1zM365,544h1v1h-1zM366,536h1v1h-1zM367,544h1v1h-1zM369,545h1v1h-1zM371,545h1v1h-1zM374,545h1v1h-1zM375,544h1v1h-1zM377,536h1v1h-1zM383,545h1v1h-1zM386,535h1v1h-1zM387,545h1v1h-1zM388,535h1v1h-1zM391,545h1v1h-1zM391,536h1v1h-1zM393,545h1v1h-1zM401,545h1v1h-1zM403,545h1v1h-1zM404,545h1v1h-1zM404,536h1v1h-1zM405,545h1v1h-1zM408,545h1v1h-1zM409,536h1v1h-1zM410,545h1v1h-1zM411,535h1v1h-1zM412,544h1v1h-1zM413,545h1v1h-1zM415,544h1v1h-1zM417,544h1v1h-1zM419,545h1v1h-1zM419,536h1v1h-1zM419,534h1v1h-1zM420,536h1v1h-1zM423,535h1v1h-1zM428,538h1v1h-1zM429,533h1v1h-1zM430,545h1v1h-1zM430,544h1v1h-1zM433,537h1v1h-1zM435,545h1v1h-1zM438,545h1v1h-1zM438,536h1v1h-1zM439,536h1v1h-1zM441,545h1v1h-1zM441,537h1v1h-1zM457,545h1v1h-1zM458,545h1v1h-1zM461,545h1v1h-1zM463,545h1v1h-1zM463,536h1v1h-1zM471,544h1v1h-1zM473,545h1v1h-1zM476,535h1v1h-1zM480,545h1v1h-1zM491,537h1v1h-1zM493,535h1v1h-1zM498,545h1v1h-1zM498,544h1v1h-1zM498,535h1v1h-1zM500,545h1v1h-1zM500,536h1v1h-1zM508,536h1v1h-1zM515,545h1v1h-1zM515,536h1v1h-1zM516,545h1v1h-1zM533,537h1v1h-1zM543,536h1v1h-1zM545,545h1v1h-1zM578,544h1v1h-1zM581,545h1v1h-1z" fill="#ffff00"/>
<path d="M62.2,368.0 L64.4,361.4 L67.1,371.3 L69.6,363.6 L73.1,369.6 L75.3,371.3 L77.0,368.0 L80.2,366.3 L82.4,357.6 L84.6,359.2 L88.2,360.9 L91.7,360.1 L95.0,359.5 L98.8,362.5 L101.6,361.4 L103.8,363.6 L104.3,347.7 L106.0,331.9 L107.0,335.2 L107.9,333.0 L109.2,342.3 L110.1,337.4 L110.9,326.4 L111.6,321.2 L114.2,321.2 L116.9,324.2 L119.6,330.2 L121.3,348.3 L122.9,364.7 L124.6,370.2 L126.7,359.8 L128.9,358.1 L132.2,355.1 L135.5,359.2 L137.7,358.1 L140.3,363.4 L143.2,354.3 L145.4,360.3 L150.3,358.1 L151.4,345.0 L153.1,329.7 L155.2,324.8 L157.4,322.3 L158.5,323.7 L160.2,335.2 L161.5,343.9 L163.4,338.4 L164.0,341.7 L167.3,353.8 L169.5,364.2 L171.7,358.1 L174.4,338.4 L176.4,324.8 L180.4,324.2 L182.6,323.3 L184.2,324.2 L186.4,336.3 L189.7,347.2 L192.4,360.3 L194.1,346.1 L195.7,329.7 L197.4,322.9 L202.8,321.5 L206.1,322.6 L210.5,321.2 L213.6,322.2 L218.5,327.0 L221.5,322.7 L225.1,321.3 L229.5,326.3 L231.3,321.7 L234.9,323.1 L237.5,322.2 L242.0,323.4 L244.6,321.7 L247.3,323.1 L250.0,322.2 L252.6,323.4 L259.7,321.3 L265.1,323.1 L270.4,323.1 L274.0,321.3 L276.6,323.1 L278.4,332.9 L280.2,323.1 L281.9,320.4 L286.4,321.3 L293.5,320.4 L298.8,320.4 L300.6,335.5 L302.4,357.7 L304.1,335.5 L305.9,318.1 L320.1,319.2 L321.9,335.5 L324.6,360.4 L327.2,359.5 L331.7,359.0 L336.1,348.0 L338.8,321.3 L342.3,320.4 L350.0,321.3 L364.9,321.3 L366.0,322.4 L367.0,321.3 L372.0,321.3 L373.0,322.4 L374.0,321.3 L378.2,320.5 L380.0,321.4 L434.1,321.4 L440.4,326.7 L443.0,321.4 L471.4,320.5 L476.0,320.6 L478.6,321.3 L483.1,322.8 L486.6,320.6 L490.2,321.5 L495.5,322.4 L497.3,321.5 L534.6,321.5 L537.3,322.4 L540.0,321.5 L564.8,321.5 L567.5,320.5 L570.1,321.5 L582.2,321.5" stroke="#10b4f0" stroke-width="1.05" fill="none" stroke-linejoin="round" shape-rendering="crispEdges"/>
</svg>
<div class="t" style="left:28.26px;top:191.73px;font-size:14.5px;line-height:14.5px;color:#000;font-weight:400;transform:scale(0.8900,1.0);transform-origin:0 12.274px">1500</div>
<div class="t" style="left:28.26px;top:255.73px;font-size:14.5px;line-height:14.5px;color:#000;font-weight:400;transform:scale(0.8900,1.0);transform-origin:0 12.274px">1250</div>
<div class="t" style="left:28.26px;top:319.73px;font-size:14.5px;line-height:14.5px;color:#000;font-weight:400;transform:scale(0.8900,1.0);transform-origin:0 12.274px">1000</div>
<div class="t" style="left:35.44px;top:383.73px;font-size:14.5px;line-height:14.5px;color:#000;font-weight:400;transform:scale(0.8900,1.0);transform-origin:0 12.274px">750</div>
<div class="t" style="left:35.44px;top:447.73px;font-size:14.5px;line-height:14.5px;color:#000;font-weight:400;transform:scale(0.8900,1.0);transform-origin:0 12.274px">500</div>
<div class="t" style="left:35.44px;top:511.73px;font-size:14.5px;line-height:14.5px;color:#000;font-weight:400;transform:scale(0.8900,1.0);transform-origin:0 12.274px">250</div>
<div class="t" style="left:587.61px;top:191.73px;font-size:14.5px;line-height:14.5px;color:#000;font-weight:400;transform:scale(0.8900,1.0);transform-origin:0 12.274px">0.60</div>
<div class="t" style="left:587.61px;top:255.73px;font-size:14.5px;line-height:14.5px;color:#000;font-weight:400;transform:scale(0.8900,1.0);transform-origin:0 12.274px">0.50</div>
<div class="t" style="left:587.61px;top:319.73px;font-size:14.5px;line-height:14.5px;color:#000;font-weight:400;transform:scale(0.8900,1.0);transform-origin:0 12.274px">0.40</div>
<div class="t" style="left:587.61px;top:383.73px;font-size:14.5px;line-height:14.5px;color:#000;font-weight:400;transform:scale(0.8900,1.0);transform-origin:0 12.274px">0.30</div>
<div class="t" style="left:587.61px;top:447.73px;font-size:14.5px;line-height:14.5px;color:#000;font-weight:400;transform:scale(0.8900,1.0);transform-origin:0 12.274px">0.20</div>
<div class="t" style="left:587.61px;top:511.73px;font-size:14.5px;line-height:14.5px;color:#000;font-weight:400;transform:scale(0.8900,1.0);transform-origin:0 12.274px">0.10</div>
<div class="t" style="left:61.31px;top:183.73px;font-size:14.5px;line-height:14.5px;color:#000;font-weight:400;transform:scale(0.9417,1.0);transform-origin:0 12.274px">MB/s</div>
<div class="t" style="left:564.10px;top:183.73px;font-size:14.5px;line-height:14.5px;color:#000;font-weight:400;transform:scale(0.9155,1.0);transform-origin:0 12.274px">ms</div>
<div class="t" style="left:58.45px;top:587.73px;font-size:14.5px;line-height:14.5px;color:#000;font-weight:400;transform:scale(0.8900,1.0);transform-origin:0 12.274px">0</div>
<div class="t" style="left:106.73px;top:587.73px;font-size:14.5px;line-height:14.5px;color:#000;font-weight:400;transform:scale(0.8900,1.0);transform-origin:0 12.274px">25</div>
<div class="t" style="left:158.86px;top:587.73px;font-size:14.5px;line-height:14.5px;color:#000;font-weight:400;transform:scale(0.8900,1.0);transform-origin:0 12.274px">51</div>
<div class="t" style="left:210.73px;top:587.73px;font-size:14.5px;line-height:14.5px;color:#000;font-weight:400;transform:scale(0.8900,1.0);transform-origin:0 12.274px">76</div>
<div class="t" style="left:259.08px;top:587.73px;font-size:14.5px;line-height:14.5px;color:#000;font-weight:400;transform:scale(0.8900,1.0);transform-origin:0 12.274px">102</div>
<div class="t" style="left:311.02px;top:587.73px;font-size:14.5px;line-height:14.5px;color:#000;font-weight:400;transform:scale(0.8900,1.0);transform-origin:0 12.274px">128</div>
<div class="t" style="left:363.02px;top:587.73px;font-size:14.5px;line-height:14.5px;color:#000;font-weight:400;transform:scale(0.8900,1.0);transform-origin:0 12.274px">153</div>
<div class="t" style="left:415.08px;top:587.73px;font-size:14.5px;line-height:14.5px;color:#000;font-weight:400;transform:scale(0.8900,1.0);transform-origin:0 12.274px">179</div>
<div class="t" style="left:467.08px;top:587.73px;font-size:14.5px;line-height:14.5px;color:#000;font-weight:400;transform:scale(0.8900,1.0);transform-origin:0 12.274px">204</div>
<div class="t" style="left:519.14px;top:587.73px;font-size:14.5px;line-height:14.5px;color:#000;font-weight:400;transform:scale(0.8900,1.0);transform-origin:0 12.274px">230</div>
<div class="t" style="left:563.32px;top:587.73px;font-size:14.5px;line-height:14.5px;color:#000;font-weight:400;transform:scale(0.8900,1.0);transform-origin:0 12.274px">256gB</div>
<div style="position:absolute;left:634px;top:176px;width:98px;height:26px;border:1px solid #707070;border-radius:3px;box-sizing:border-box;background:linear-gradient(to bottom,#f2f2f2 0%,#ebebeb 50%,#dddddd 51%,#cfcfcf 100%);box-shadow:inset 0 0 0 1px rgba(255,255,255,0.85);"></div>
<div class="t" style="left:669.08px;top:181.73px;font-size:14.5px;line-height:14.5px;color:#000;font-weight:400;transform:scale(0.8978,1.0);transform-origin:0 12.274px">Start</div>
<div style="position:absolute;left:623px;top:215px;width:135px;height:1px;background:#a0a0a0;"></div>
<div style="position:absolute;left:623px;top:263px;width:135px;height:1px;background:#a0a0a0;"></div>
<div style="position:absolute;left:623px;top:351px;width:135px;height:1px;background:#a0a0a0;"></div>
<div style="position:absolute;left:623px;top:478px;width:135px;height:1px;background:#a0a0a0;"></div>
<svg style="position:absolute;left:629px;top:223px" width="16" height="16" viewBox="0 0 16 16">
<defs><radialGradient id="rb" cx="0.38" cy="0.3" r="0.7"><stop offset="0" stop-color="#d8f6ff"/><stop offset="0.35" stop-color="#3cb0e8"/><stop offset="1" stop-color="#0d5a98"/></radialGradient></defs>
<circle cx="8" cy="8" r="7.3" fill="#fbfbfb" stroke="#8d8d8d" stroke-width="1.1"/>
<circle cx="8" cy="8" r="3.9" fill="url(#rb)" stroke="#0b2a48" stroke-width="1.4"/>
</svg>
<svg style="position:absolute;left:629px;top:243px" width="16" height="16" viewBox="0 0 16 16">
<defs><linearGradient id="rg" x1="0.2" y1="0.1" x2="0.8" y2="0.9"><stop offset="0" stop-color="#c9cdd2"/><stop offset="1" stop-color="#fafafa"/></linearGradient></defs>
<circle cx="8" cy="8" r="7.3" fill="#fbfbfb" stroke="#8d8d8d" stroke-width="1.1"/>
<circle cx="8" cy="8" r="5.2" fill="url(#rg)"/>
</svg>
<div class="t" style="left:647.85px;top:223.73px;font-size:14.5px;line-height:14.5px;color:#000;font-weight:400;transform:scale(0.9942,1.0);transform-origin:0 12.274px">Read</div>
<div class="t" style="left:649.00px;top:243.73px;font-size:14.5px;line-height:14.5px;color:#000;font-weight:400;transform:scale(0.8837,1.0);transform-origin:0 12.274px">Write</div>
<div style="position:absolute;left:629px;top:273px;width:16px;height:16px;border:1px solid #8e8f8f;box-sizing:border-box;background:linear-gradient(135deg,#d6d8da,#f6f6f6);box-shadow:inset 0 0 0 1px #fdfdfd;"></div>
<div class="t" style="left:647.98px;top:273.73px;font-size:14.5px;line-height:14.5px;color:#000;font-weight:400;transform:scale(0.9031,1.0);transform-origin:0 12.274px">Short stroke</div>
<div style="position:absolute;left:629px;top:297px;width:82px;height:24px;border:1px solid #aaa;box-sizing:border-box;background:#fff;"></div>
<div class="t" style="left:632.04px;top:301.23px;font-size:14.5px;line-height:14.5px;color:#8a8a8a;font-weight:400;transform:scale(0.8881,1.0);transform-origin:0 12.274px">40</div>
<div style="position:absolute;left:690px;top:298px;width:19px;height:11px;border:1px solid #b8b8b8;box-sizing:border-box;background:linear-gradient(#f4f4f4,#e6e6e6);"></div>
<div style="position:absolute;left:690px;top:309px;width:19px;height:11px;border:1px solid #b8b8b8;box-sizing:border-box;background:linear-gradient(#f4f4f4,#e6e6e6);"></div>
<svg style="position:absolute;left:690px;top:298px" width="19" height="22"><polygon points="6,6.5 13,6.5 9.5,3" fill="#909090"/><polygon points="6,14.5 13,14.5 9.5,18" fill="#909090"/></svg>
<div class="t" style="left:727.15px;top:301.73px;font-size:14.5px;line-height:14.5px;color:#000;font-weight:400;transform:scale(0.9469,1.0);transform-origin:0 12.274px">gB</div>
<div style="position:absolute;left:629px;top:333px;width:16px;height:16px;border:1px solid #8e8f8f;box-sizing:border-box;background:linear-gradient(135deg,#d6d8da,#f6f6f6);box-shadow:inset 0 0 0 1px #fdfdfd;"></div>
<svg style="position:absolute;left:629px;top:333px" width="16" height="16" viewBox="0 0 16 16"><path d="M3.6,8.2 L6.3,12.2 L12.4,3.6" stroke="#2c3e90" stroke-width="2.1" fill="none" stroke-linejoin="round"/></svg>
<div class="t" style="left:649.24px;top:333.73px;font-size:14.5px;line-height:14.5px;color:#000;font-weight:400;transform:scale(0.9002,1.0);transform-origin:0 12.274px">Transfer rate</div>
<div class="t" style="left:629.15px;top:355.73px;font-size:14.5px;line-height:14.5px;color:#000;font-weight:400;transform:scale(0.9025,1.0);transform-origin:0 12.274px">Minimum</div>
<div style="position:absolute;left:629px;top:373px;width:123px;height:19px;background:#000;border-top:1px solid #8a8a8a;border-left:1px solid #8a8a8a;box-sizing:border-box;"></div>
<div class="t" style="left:653.16px;top:374.73px;font-size:14.5px;line-height:14.5px;color:#18b4f4;font-weight:700;transform:scale(1.0027,1.0);transform-origin:0 12.274px">826.1 MB/s</div>
<div class="t" style="left:629.14px;top:395.73px;font-size:14.5px;line-height:14.5px;color:#000;font-weight:400;transform:scale(0.9101,1.0);transform-origin:0 12.274px">Maximum</div>
<div style="position:absolute;left:629px;top:413px;width:123px;height:19px;background:#000;border-top:1px solid #8a8a8a;border-left:1px solid #8a8a8a;box-sizing:border-box;"></div>
<div class="t" style="left:649.63px;top:414.73px;font-size:14.5px;line-height:14.5px;color:#18b4f4;font-weight:700;transform:scale(0.9960,1.0);transform-origin:0 12.274px">1031.7 MB/s</div>
<div class="t" style="left:628.90px;top:433.73px;font-size:14.5px;line-height:14.5px;color:#000;font-weight:400;transform:scale(0.9639,1.0);transform-origin:0 12.274px">Average</div>
<div style="position:absolute;left:629px;top:451px;width:123px;height:19px;background:#000;border-top:1px solid #8a8a8a;border-left:1px solid #8a8a8a;box-sizing:border-box;"></div>
<div class="t" style="left:652.76px;top:452.73px;font-size:14.5px;line-height:14.5px;color:#18b4f4;font-weight:700;transform:scale(1.0068,1.0);transform-origin:0 12.274px">986.4 MB/s</div>
<div style="position:absolute;left:629px;top:487px;width:16px;height:16px;border:1px solid #8e8f8f;box-sizing:border-box;background:linear-gradient(135deg,#d6d8da,#f6f6f6);box-shadow:inset 0 0 0 1px #fdfdfd;"></div>
<svg style="position:absolute;left:629px;top:487px" width="16" height="16" viewBox="0 0 16 16"><path d="M3.6,8.2 L6.3,12.2 L12.4,3.6" stroke="#2c3e90" stroke-width="2.1" fill="none" stroke-linejoin="round"/></svg>
<div class="t" style="left:648.50px;top:487.73px;font-size:14.5px;line-height:14.5px;color:#000;font-weight:400;transform:scale(0.9274,1.0);transform-origin:0 12.274px">Access time</div>
<div style="position:absolute;left:629px;top:505px;width:123px;height:19px;background:#000;border-top:1px solid #8a8a8a;border-left:1px solid #8a8a8a;box-sizing:border-box;"></div>
<div class="t" style="left:661.17px;top:506.73px;font-size:14.5px;line-height:14.5px;color:#f0f000;font-weight:700;transform:scale(0.9832,1.0);transform-origin:0 12.274px">0.101 ms</div>
<div style="position:absolute;left:629px;top:529px;width:16px;height:16px;border:1px solid #8e8f8f;box-sizing:border-box;background:linear-gradient(135deg,#d6d8da,#f6f6f6);box-shadow:inset 0 0 0 1px #fdfdfd;"></div>
<svg style="position:absolute;left:629px;top:529px" width="16" height="16" viewBox="0 0 16 16"><path d="M3.6,8.2 L6.3,12.2 L12.4,3.6" stroke="#2c3e90" stroke-width="2.1" fill="none" stroke-linejoin="round"/></svg>
<div class="t" style="left:647.46px;top:529.73px;font-size:14.5px;line-height:14.5px;color:#000;font-weight:400;transform:scale(0.9007,1.0);transform-origin:0 12.274px">Burst rate</div>
<div style="position:absolute;left:629px;top:547px;width:123px;height:19px;background:#000;border-top:1px solid #8a8a8a;border-left:1px solid #8a8a8a;box-sizing:border-box;"></div>
<div class="t" style="left:648.86px;top:548.73px;font-size:14.5px;line-height:14.5px;color:#ffffff;font-weight:700;transform:scale(1.0053,1.0);transform-origin:0 12.274px">2414.9 MB/s</div>
<div class="t" style="left:628.82px;top:569.73px;font-size:14.5px;line-height:14.5px;color:#000;font-weight:400;transform:scale(0.9328,1.0);transform-origin:0 12.274px">CPU usage</div>
<div style="position:absolute;left:629px;top:587px;width:123px;height:19px;background:#000;border-top:1px solid #8a8a8a;border-left:1px solid #8a8a8a;box-sizing:border-box;"></div>
<div class="t" style="left:674.73px;top:588.73px;font-size:14.5px;line-height:14.5px;color:#ffffff;font-weight:700;transform:scale(0.9909,1.0);transform-origin:0 12.274px">7.3%</div>
</body></html>
